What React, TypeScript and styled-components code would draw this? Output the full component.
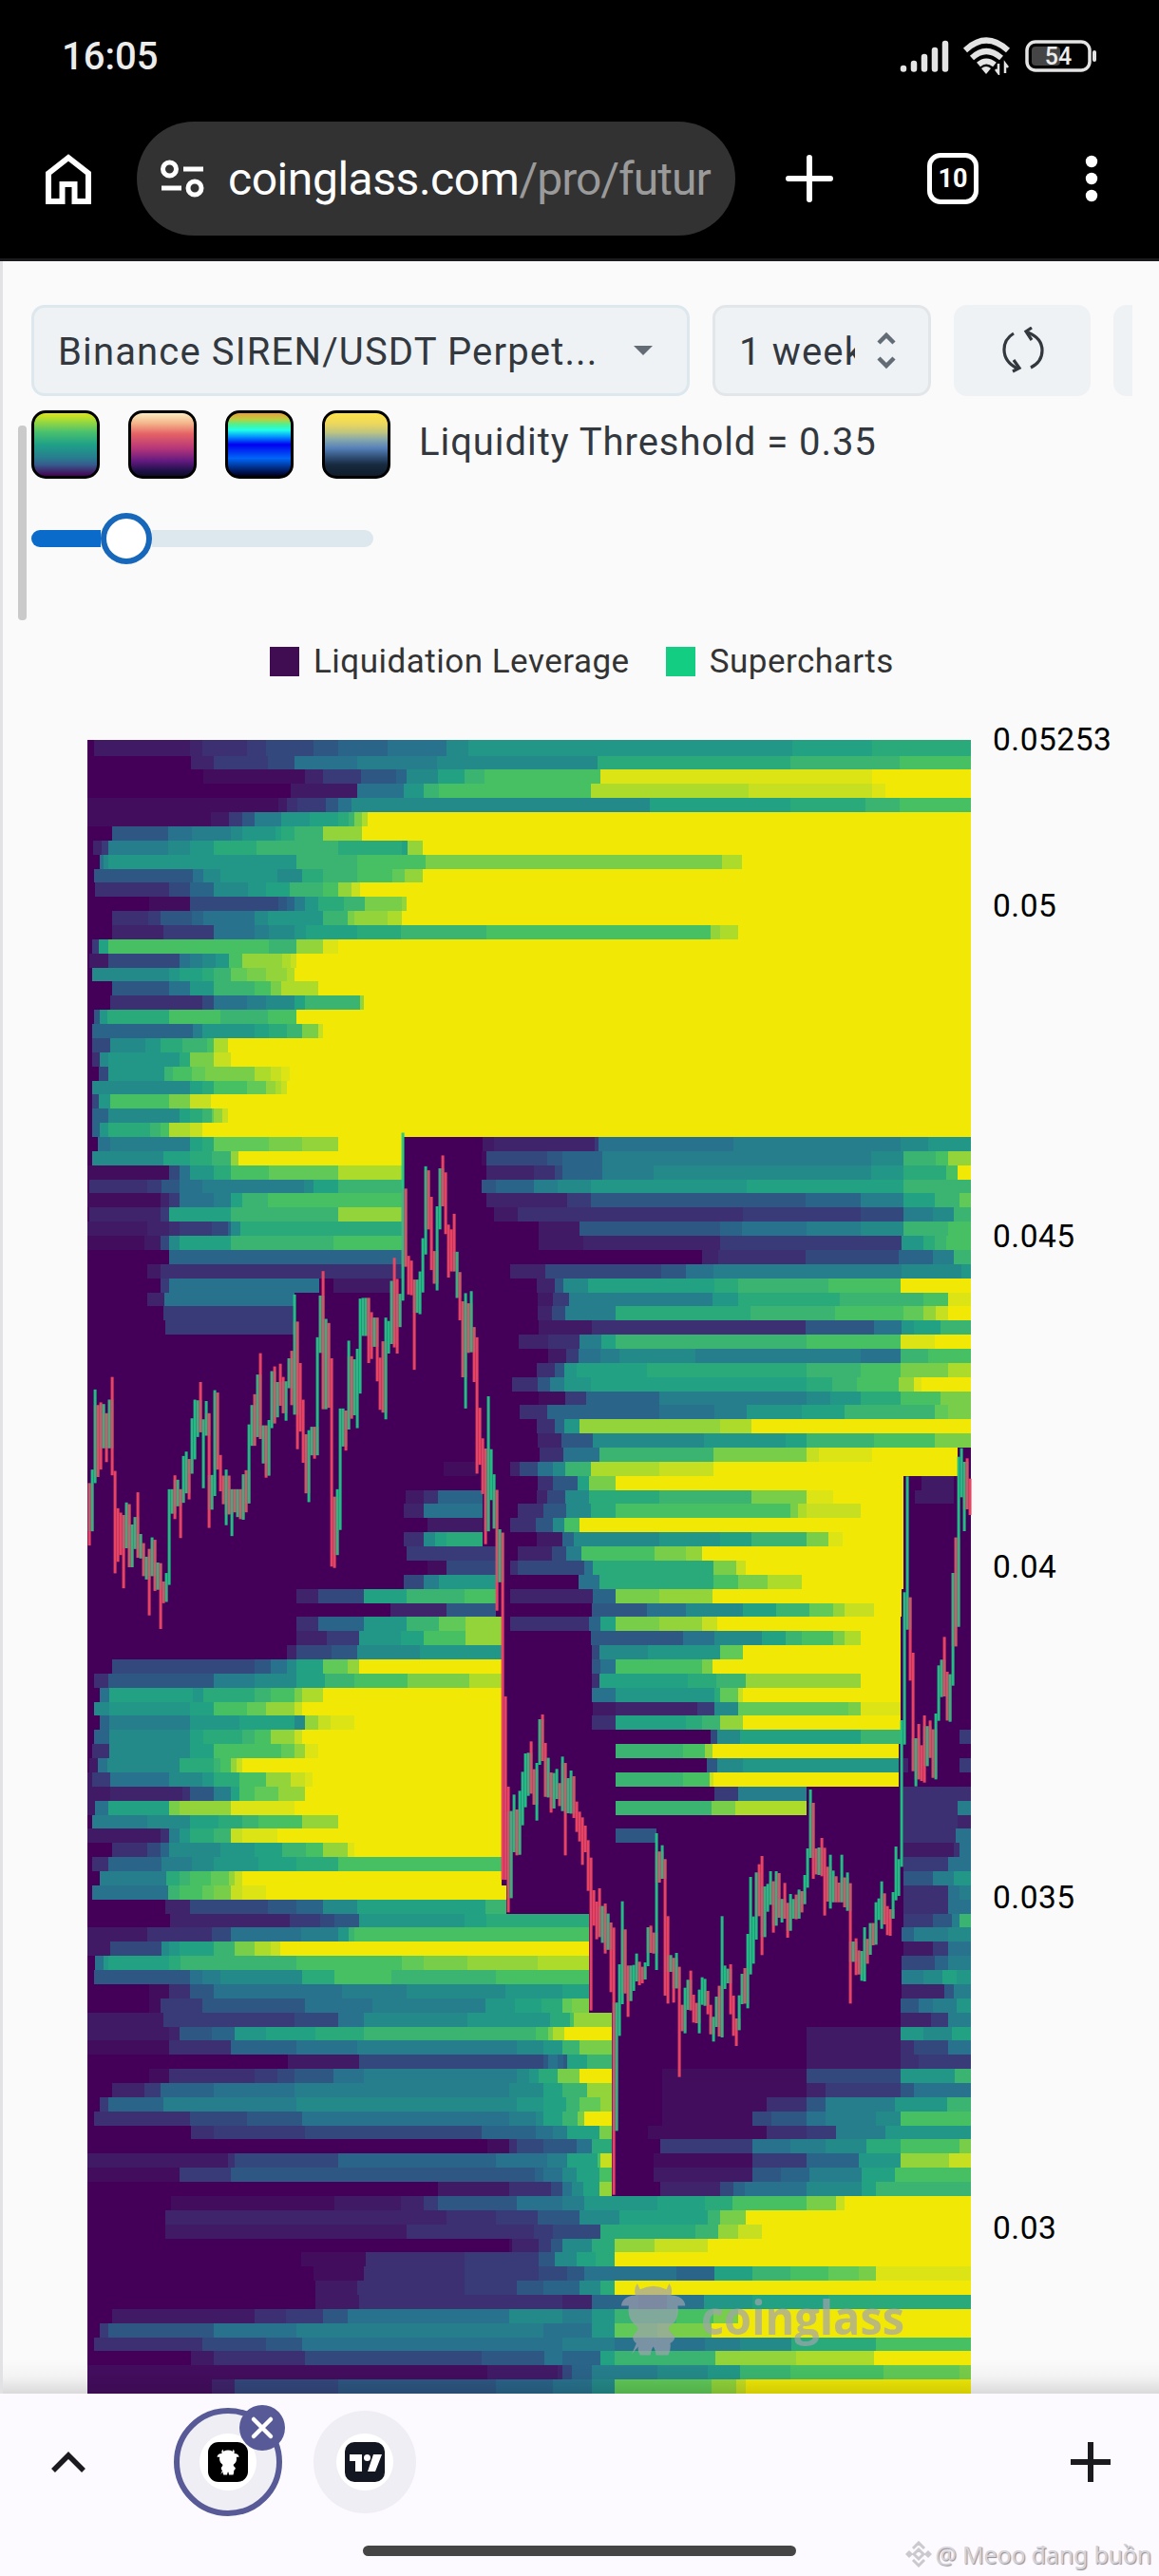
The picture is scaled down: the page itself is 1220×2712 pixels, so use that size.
import React from 'react';
import styled, { createGlobalStyle } from 'styled-components';

const GlobalStyle = createGlobalStyle`
  * {
    box-sizing: border-box;
  }
  body {
    margin: 0;
    background: #fafafa;
    font-family: Roboto, 'Liberation Sans', sans-serif;
  }
`;

/* ---------- chart data ---------- */

const PALETTE: Record<string, string> = {
  a: '#440058', b: '#430d5e', c: '#411a66', d: '#3f246c', e: '#3c2f72', f: '#383b77',
  g: '#33487d', h: '#2e5783', i: '#2a6489', j: '#28728d', k: '#267e8c', l: '#248a89',
  m: '#229787', n: '#22a183', o: '#2aaa7b', p: '#3ab470', q: '#47c063', r: '#60c957',
  s: '#78cd49', t: '#92d43a', u: '#acdb2b', v: '#c6df20', w: '#dde416', y: '#f1e905',
};

// One string per price row: a colour level followed by the x where it starts.
const HEAT_ROWS = [
  'a0c7d108e121f168g188h238i264j316l378m401n742o826',
  'a0d109f133g190j218k284l368o537p740q855',
  'a0b122d229f248h288i325l336n369p397q418w540y826',
  'a0c214j284m333p354q370u530v696w826y840',
  'b0c201e210f221h251j264l278n592o740p819q855',
  'b0c130f149h163k176m204n234o264p275s281u289y295',
  'a0h26j85k110l151m163n198o204p218t248y289',
  'a0d6f15k22l85m108o133p178o264n331t337y353',
  'a0j13l17m22p220q284s356u668y689',
  'a0h7j111l122m140l200o226p248q284r321t334y353',
  'a0e8g86i108l133m169n188p213q248t264v278y287',
  'a0b65g108h201i210k218m229o243p270s292t331y336',
  'a0e26f64h77i110j122l176m190p248s274t281u316y331',
  'a0d26f80j133k176l191m218n230o284p330q420t656u666y685',
  'a0f5n12q22p191t220w248y264',
  'a0c2g22j97k108l121m135q149t163u205v214y220',
  'a0l5m86n97o121p133r151s168t188u210y218',
  'a0h26j86m108p133q176s193u204y243',
  'a0e24g121j133k168l188n218p229t287y291',
  'a0h7m13o21q86p140q190y220',
  'a0i5k111m121n176o191p210s226v243y248',
  'a0g5l24m61o77p100q126u133y148',
  'a0e5l13m22o97s108v133y151',
  'a0g12m22p81q90r110s124u176v193w204y213',
  'a0l5n108o121q133r168t188u198v204y210',
  'a0g5m12q24s86v108y130',
  'a0i5l22n97o108p121r131t133v142y148',
  'a0i5m13o22p66q77u86v108y121',
  'a0j11k24n108o121r133s191t226y264a333c416d428f534j538k680l856m885',
  'a0l5n80o108p131t151y159a333b415g420h484i500k542l825p859q893t906',
  'b0g86j97m108o133q151r191u264a333d420e470g492i500k542l596m825o859q904y916',
  'a0e2f63h78j97k121l228n238p264a333h415i430k470l495m530n694p859',
  'b0d77f86j97k133n151p163q190a333d420f505h530i756k814n859p892r918',
  'a0d2f77n86p151t264a333c428e453f690g814k859l890p912',
  'c0d63e86f97g131i148l151o161a333c475h518i666j689k757l814p859q906',
  'b0c60g77l86n97p151q259a333c475d522f666m857o880p892q904',
  'a0i86a331d647e664g756i854k890p912',
  'a0c63e77a333d445g482h604j630k659l857m920',
  'a0f77j86a244c259a325d473h492l501n527o660p685q780y856',
  'a0d63j81a218c474f490k507m658o685p792q880w906',
  'a0f80a218d474g489k503o556p698q787r859t880v893y906',
  'a0f82a218c475e531h756j828m857n870p898',
  'a0d454e485k518n541p556q757w856y892',
  'a0c485f504j517k540l560k640j814p856q885',
  'a0e473h492m502n515o589p757q814s856u906',
  'a0e447h474k487m502n530o757p784q810t854w870y878',
  'a0b475f503i525k602l757m782o814q856s898',
  'a0e455i484j602k660m694n752p797r892s906',
  'a0e473i492m502t518u666y699',
  'a0d474h499l532m649n735p757q828s892',
  'a0e476j501p539s659v757w770y826a916',
  'a0b375a410d445g455j474l490p503u530v602y659a916',
  'a0e474h490n516s528y556a859c878a912',
  'a0c335e354i369a416d473g484l503o528p602s699w757y785a859c871a912',
  'a0d333j354a416e453h480l504o530q556s740u748v757y814a859',
  'a0c358a416e445h472l490q502y518a859',
  'a0e333l354n366o378a416c473i500l512m602n666p699s757w780y795a859',
  'a0f336a430d453g489k504q520s597t630y647a859',
  'a0b358g378a430e445g453j523o532s659v683y693a859',
  'a0g333k354m370a430j517o539q659s685u716y752a859',
  'a0d220g243n291p336q397a430d445i532s556t602y658a857',
  'a0d319h378a430h531j589l630n690p725r760t785v797y828a857',
  'a0e220i243m291p336r370t398a436e445i528n540s556t602v647y663a856',
  'a0d220f252m286n330q354t398a436h530j627l660n710p735q752s785u797y814a856',
  'a0d210g220h257l284m350a436g531l539m590r666y690a856',
  'a0g26h176j193l210n220r248t274y286a436h531j540q556s647y658a856',
  'a0e7h22k133l176n220p250q281s337u402a436e531n539o632p662t693y814a856',
  'a0j13n23m111o122p176q193s218u226y248a436j531m556o660r666v685y690a856',
  'a0l7m23n108q133r168t188v218y226a436c532d556f642l660r685s801w814a856',
  'a0i13k23m108n160l218t229v243w256y281a436e531n556o630p647t666y690a856',
  'a0i7l23n108o122p163q176t193v218y226a436g656l663n687p814a856f918',
  'a0e5l23n108q133r204t218w229y243a436p556q627t650y658a854',
  'a0c2j11l21o97p133q140t151v157y163a436h652l663m690a854d859a864f918',
  'c0f5j24l86m121o133q160t188v214w229y237a436p556q627v655y659a854',
  'c0d24e100h108k133n151q160r176t201y229a436f660k685a757e859',
  'c0j8n22s86t97w151y218a436p556s657u682a757e859k916',
  'a0k5l63n108o138p163q180t226y264a436e859d916',
  'c0e77k86m97o108p133v151w163y200a436h556a599e859j914',
  'a0e26g63i77l86m140n176p205q230t248w274y281a436c859e912j918',
  'a0e5i22k78l110m133n180o220q264a436f859j906',
  'a0k13o83p97q108r130t149v155y163a436h859k890m912',
  'a0j5p85q97r121s133v151w163y188a441e859j906k918',
  'a0d82g108h190i220l248n284p419a441e859j906',
  'a0d87f213g245h260m286n397o420a528f859h890k910p918',
  'c0e63g131j151k225m264p275q281a528i857k870l906',
  'c0g24l78m86n97p133s155u176v193y203a528c859f890j906',
  'a0j8m17n22o86p98q220r331s354t400u474a528g857i892k906',
  'a0h7j108k121l140o226q260p320q430a528k857l880n900m915',
  'a0b65e86h108j133k268l336m440n500a528d857h902k912',
  'a0b65f77h121j229k300m419n450o478r500s510a528h856j875k890m915',
  'c0f80g218j264l291m400o487q508t512a552d856f888k906',
  'c0d86h97i131m155n188o240p291q472s485u490y502a552c757m856l880n910',
  'b0e86i151j220k284l452m480p500s518a552c757e856g870j906',
  'a0c211g286h480i495h501j485n505p526a552c757e856f875',
  'a0b65e86f176g200h218j259k291l452m465o475s495y518a552b605g757m856p913',
  'a0d26f60i77j133k218l444n480p500t526a552b605d757f777h856j870',
  'a0f13i22k80l220m452n480p504r518t540a552b605e715h757k777m850p905',
  'a0e7g108h168j226k444l472n480p500s516y523a552b605g700h720j757k777l830q856',
  'a0e109f133g229i415j472k490n505s539a552b590e715f757k788m840',
  'a0b421e444g452h480j515o531a552f603j700k740l777o820q856s918',
  'c0e148g155i264j430k484n505q537v540a552b596f700i757m812t856v907',
  'b0f97h151i471j480l500n515q539a552c596h700i730k760n815q850',
  'a0c369e444g488j500l510n522t539a552d603g666i680j692l757n815p830',
  'a0b88c260d330f354h369j452k500m523n600o650q679s757v788y797',
  'a0d82e378f430h474l518n560p653s666y693',
  'a0c82e336f470g490o540p640t664v685y710',
  'a0b444d447f475h488l500o531t555v597y653',
  'a0b225e293f397h475l492n515o535y555',
  'a0b238e291f397g475h505j523i620n660p700q740r780s812w830',
  'a0c240e284f397h452i480l518o540y555',
  'a0c240e286d500i531h580j610m649n700o780',
  'a0c26e176f209h248j274l444k500m531p555q620s659y685',
  'a0f13h22j133k220j480m531r555s600y657',
  'a0e7g121h188j226k500j555k650l687o741q830',
  'a0c109e133g229h415j481i500n540p555t661u746y828',
  'b0c421d495g500i510k531l600m653p687q740r838s918',
  'b0d131g155h264i430j490l531r555t657v683y693',
];

const PLOT_W = 930;
const PLOT_H = 1741;
const ROW_H = 14.866;
const FIRST_ROW_H = 16.6;

const parseRow = (row: string) =>
  Array.from(row.matchAll(/([a-z])(\d+)/g))
    .map((m) => ({ level: m[1], x: Number(m[2]) }))
    .sort((p, q) => p.x - q.x);

// Bars are "direction high-low" counted down from the series origin.
interface Series {
  origin: number;
  unit: number;
  bars: string;
}

const SERIES: Series[] = [
  {
    origin: 401,
    unit: 1 / 2.8,
    bars: `r1068-1252 g1028-1210 g792-1068 r838-1050 r830-1028 g835-965 r862-1006 g822-965 r755-1045 r1032-1334
      r1142-1300 r1155-1280 r1162-1378 g1125-1260 r1130-1316 g1190-1316 g1168-1262 r1095-1288 g1218-1290 r1245-1342
      g1285-1352 r1262-1458 g1228-1342 r1235-1386 g1302-1382 r1304-1498 r1358-1422 g1333-1418 g1086-1368 g1086-1158
      r1045-1174 g1058-1136 r1086-1230 g988-1126 g975-1098 r997-1116 g877-1040 g822-998 g824-932 r770-918
      g880-1083 g826-928 r862-1200 g1044-1146 g794-1106 r801-1028 r985-1092 r1046-1130 g1028-1192 r1046-1160
      g1086-1224 r1086-1154 g1086-1168 r1086-1174 g1042-1176 r1030-1154 g895-1128 g838-958 r806-958 g748-932
      r685-938 g898-1010 r898-1052 g882-1046 g738-906 r724-892 g770-874 r716-840 r755-862 g768-884
      g700-788 r678-838 g512-866 r592-968 r714-916 r822-1008 r924-1098 g912-1124 g902-986 r902-996
      g638-986 g515-684 r443-850 g584-850 r596-846 r700-1314 r1108-1318 g1086-1280 g848-1206 g848-960
      r854-972 g648-910 r694-878 g703-868 g672-906 g524-804 g522-634 g522-634 r522-714 r564-702
      g580-666 r580-768 r698-852 r650-860 g580-880 g590-686 g472-658 r404-668 r466-686 g510-608
      g35-530 r200-430 r398-512 r412-514 r468-734 g468-566 g444-570 g346-506 g134-394 r146-320
      r224-440 r384-480 g252-500 g140-320 r102-252 r152-334 r306-462 r320-444 r274-444 g386-522
      r446-588 r532-756 g508-848 r538-684 g502-682 r608-770 r638-1040 r846-1014 r936-1100 r966-1248
      g812-1210 g968-1118 g1042-1202 r1088-1444 g1204-1360 r1214-2237`,
  },
  {
    origin: 921,
    unit: 1 / 3,
    bars: `r258-837 r543-940 g620-895 g568-750 r615-760 g556-758 g496-665 g438-608 g436-572 r400-565
      r488-600 g468-650 g330-474 r315-462 r405-575 g452-577 r498-625 g500-612 g487-582 r532-604
      g448-620 r468-760 g516-627 g492-628 r510-642 r590-686 r622-716 r640-790 r666-750 r712-872
      r767-1250 r870-982 r906-1025 r864-1018 g920-1036 r912-1070 g944-1058 r972-1192 r988-1832 g1225-1630
      g1104-1330 g905-1230 r994-1196 r1108-1270 g1108-1220 g1106-1188 g1070-1158 r1096-1170 r1112-1164 g1098-1152
      g987-1110 r982-1068 r1004-1070 g690-1122 r748-846 g728-834 r772-1203 r952-1228 g1075-1128 r1084-1225
      g1068-1180 r1112-1460 r1232-1315 g1178-1322 g1153-1248 r1124-1250 r1200-1288 r1226-1290 g1184-1322 g1145-1232
      g1150-1235 r1188-1262 r1232-1325 g1270-1348 g1206-1302 r1172-1332 g952-1335 g1108-1182 g1118-1164 r1104-1262
      r1203-1330 r1275-1362 g1202-1312 g1134-1230 r1116-1228 g1008-1243 g828-1136 g953-1102 g814-1026 r788-952
      r762-1075 g858-1018 g850-938 g810-916 r842-1004 g810-982 r816-957 g898-972 r847-960 r910-1020
      g882-998 g898-960 r884-962 g868-960 r873-940 g822-914 g738-862 g552-768 r594-834 r738-820
      g735-822 r705-826 r736-950 r796-906 g758-928 g808-908 r826-908 r846-908 g758-908 r830-924
      g814-935 r848-1228 g1032-1096 r1022-1138 r1060-1136 g1062-1156 g987-1158 r1024-1102 g974-1074 r974-1044
      g908-1042 g896-964 g842-992 r880-978 r920-1012 r930-1014 g876-960 g732-902 g772-888 g333-796
      g-71-410 g-437-47 r-55-208 r120-494 g390-542 r345-520 r412-525 r318-530 g352-478 r334-452
      r362-515 g312-520 g160-335 g142-260 r70-258 r180-334 g188-338 g-132-224 r-244-100 g-499-38
      g-526--371 g-483--264 r-494--333 r-430--315`,
  },
];

interface Bar {
  up: boolean;
  top: number;
  bottom: number;
}

const BARS: Bar[] = SERIES.flatMap(({ origin, unit, bars }) =>
  Array.from(bars.matchAll(/([rg])(-?\d+)-(-?\d+)/g)).map((m) => ({
    up: m[1] === 'g',
    top: origin + Number(m[2]) * unit,
    bottom: origin + Number(m[3]) * unit,
  }))
);

const TICKS = [
  { label: '0.05253', y: 0 },
  { label: '0.05', y: 175 },
  { label: '0.045', y: 523 },
  { label: '0.04', y: 871 },
  { label: '0.035', y: 1219 },
  { label: '0.03', y: 1567 },
];

/* ---------- browser chrome ---------- */

const Page = styled.div`
  width: 1220px;
  height: 2712px;
  display: flex;
  flex-direction: column;
  overflow: hidden;
`;

const StatusBar = styled.div`
  height: 116px;
  padding: 2px 65px 0 65px;
  display: flex;
  align-items: center;
  justify-content: space-between;
  background: #000;
  color: #ececec;
  font-size: 40px;
  font-weight: 500;
`;

const StatusIcons = styled.div`
  display: flex;
  align-items: center;
  gap: 14px;
`;

const BrowserBar = styled.div`
  height: 159px;
  padding: 2px 64px 14px 44px;
  display: flex;
  align-items: center;
  background: #000;
  border-bottom: 3px solid #1b1a1d;
  color: #fff;

  svg {
    flex: none;
  }
`;

const UrlPill = styled.div`
  width: 632px;
  height: 120px;
  margin: 0 51px 0 44px;
  padding: 0 14px 0 25px;
  display: flex;
  align-items: center;
  border-radius: 60px;
  background: #323232;
`;

const Url = styled.div`
  flex: 1;
  margin-left: 25px;
  white-space: nowrap;
  font-size: 48px;
  letter-spacing: -0.45px;

  span {
    color: #9a9a9a;
    letter-spacing: -1px;
  }
`;

const TabCount = styled.div`
  width: 54px;
  height: 54px;
  margin: 0 112px 0 97px;
  display: flex;
  align-items: center;
  justify-content: center;
  border: 5px solid #fff;
  border-radius: 14px;
  font-size: 27px;
  font-weight: 700;
`;

/* ---------- page content ---------- */

const Content = styled.main`
  position: relative;
  flex: none;
  height: 2245px;
  padding-top: 46px;
  border-left: 3px solid #e2e2e4;
  background: #fafafa;
  overflow: hidden;
`;

const ScrollThumb = styled.div`
  position: absolute;
  left: 16px;
  top: 173px;
  width: 9px;
  height: 205px;
  border-radius: 4px;
  background: #cacaca;
`;

const Toolbar = styled.div`
  width: 1159px;
  height: 97px;
  margin-left: 30px;
  display: flex;
  gap: 24px;
  overflow: hidden;
`;

const Field = styled.div<{ $width: number; $border?: string; $right?: number }>`
  flex: none;
  width: ${(p) => p.$width}px;
  height: 96px;
  padding: 0 ${(p) => p.$right || 25}px 0 25px;
  display: flex;
  align-items: center;
  justify-content: space-between;
  border: 3px solid ${(p) => p.$border || '#eef2f5'};
  border-radius: 14px;
  background: #eef2f5;
  color: #32383e;
`;

const FieldText = styled.span<{ $width?: number }>`
  width: ${(p) => (p.$width ? `${p.$width}px` : 'auto')};
  padding-top: 2px;
  overflow: hidden;
  white-space: nowrap;
  font-size: 40px;
  letter-spacing: 1.15px;
`;

const Swatches = styled.div`
  height: 74px;
  margin: 13px 0 0 30px;
  display: flex;
  align-items: center;
  gap: 30px;
`;

const Swatch = styled.div<{ $fill: string }>`
  width: 72px;
  height: 72px;
  border: 3px solid #000;
  border-radius: 15px;
  background: linear-gradient(${(p) => p.$fill});
`;

const Threshold = styled.div`
  margin-top: -4px;
  color: #32383e;
  font-size: 40px;
  line-height: 60px;
  white-space: nowrap;
  letter-spacing: 0.95px;
`;

const Slider = styled.div`
  width: 360px;
  height: 54px;
  margin: 35px 0 0 30px;
  display: flex;
  align-items: center;
`;

const Track = styled.div<{ $filled?: boolean }>`
  flex: ${(p) => (p.$filled ? '0 0 73px' : '1')};
  height: 18px;
  background: ${(p) => (p.$filled ? '#0b6bcb' : '#dde7ee')};
  border-radius: ${(p) => (p.$filled ? '9px 0 0 9px' : '0 9px 9px 0')};
`;

const Thumb = styled.div`
  width: 54px;
  height: 54px;
  border: 6px solid #1768bb;
  border-radius: 50%;
  background: #fff;
`;

const Legend = styled.div`
  height: 46px;
  margin: 79px 0 0 281px;
  display: flex;
  align-items: center;
  color: #333;
  font-size: 35px;
`;

const LegendItem = styled.div<{ $color: string }>`
  display: flex;
  align-items: center;
  gap: 15px;
  margin-right: 38px;
  white-space: nowrap;
  letter-spacing: 0.5px;

  &::before {
    content: '';
    width: 31px;
    height: 31px;
    background: ${(p) => p.$color};
  }
`;

const Chart = styled.svg`
  display: block;
  margin: 60px 0 0 89px;
  overflow: visible;

  .tick {
    font-size: 33.5px;
    letter-spacing: 0.5px;
    fill: #000;
  }
  .mark {
    font-family: 'Open Sans', 'Noto Sans', sans-serif;
    font-size: 50px;
    font-weight: 700;
  }
`;

const BottomFade = styled.div`
  position: absolute;
  left: 0;
  right: 0;
  bottom: 0;
  height: 34px;
  background: linear-gradient(rgba(0, 0, 0, 0), rgba(0, 0, 0, 0.03) 50%, rgba(0, 0, 0, 0.13));
`;

/* ---------- bottom tab strip ---------- */

const TabStrip = styled.footer`
  position: relative;
  flex: 1;
  display: flex;
  flex-direction: column;
  align-items: center;
  background: #fcfaff;
`;

const TabRow = styled.div`
  width: 100%;
  height: 144px;
  padding: 0 50px 0 53px;
  display: flex;
  align-items: center;

  > svg {
    flex: none;
  }
`;

const Tab = styled.div<{ $active?: boolean }>`
  position: relative;
  width: ${(p) => (p.$active ? 114 : 108)}px;
  height: ${(p) => (p.$active ? 114 : 108)}px;
  margin-left: ${(p) => (p.$active ? 92 : 33)}px;
  display: flex;
  align-items: center;
  justify-content: center;
  border-radius: 50%;
  border: ${(p) => (p.$active ? '6px solid #575a96' : 'none')};
  background: #f0eef5;
`;

const Favicon = styled.div`
  width: 60px;
  height: 60px;
  display: flex;
  align-items: center;
  justify-content: center;
  border-radius: 50%;
  background: #fff;
`;

const CloseBadge = styled.div`
  position: absolute;
  top: -9px;
  right: -9px;
  width: 48px;
  height: 48px;
  display: flex;
  align-items: center;
  justify-content: center;
  border-radius: 50%;
  background: #575a96;
`;

const Spacer = styled.div`
  flex: 1;
`;

const GestureBar = styled.div`
  width: 456px;
  height: 11px;
  margin-top: 16px;
  border-radius: 6px;
  background: #454545;
`;

const Credit = styled.div`
  position: absolute;
  right: 8px;
  bottom: 6px;
  display: flex;
  align-items: center;
  gap: 4px;
  color: #d6d3d9;
  font-family: 'Noto Sans', sans-serif;
  font-size: 25px;
  line-height: 34px;
  letter-spacing: -0.2px;
  white-space: nowrap;
  text-shadow: 1px 1px 1px #8d8a92;
`;

const BULL =
  'M17 0 L20 7 Q34 -1 48 7 L51 0 Q55 6 53 14 Q67 15 68 26 L60 26 Q62 41 54 48 Q49 51 51 55 L57 62 Q57 67 52 70 Q53 77 50 84 L37 84 Q36 77 34 74 Q32 77 31 84 L20 84 Q17 79 18 74 L11 83 L16 70 Q11 66 13 60 L17 55 Q19 51 14 48 Q6 40 8 26 L0 26 Q1 15 15 14 Q13 6 17 0Z';

function Heatmap() {
  return (
    <g shapeRendering='crispEdges'>
      {HEAT_ROWS.map((row, r) => {
        const y = r === 0 ? 0 : FIRST_ROW_H + (r - 1) * ROW_H;
        const h = r === 0 ? FIRST_ROW_H : ROW_H;
        return parseRow(row).map((cell, i, cells) => {
          const end = i + 1 < cells.length ? cells[i + 1].x : PLOT_W;
          return (
            <rect
              key={`${r}-${i}`}
              x={cell.x}
              y={Math.round(y)}
              width={end - cell.x}
              height={Math.min(Math.round(y + h), PLOT_H) - Math.round(y)}
              fill={PALETTE[cell.level]}
            />
          );
        });
      })}
    </g>
  );
}

function Candles() {
  return (
    <g>
      {BARS.map((bar, i) => (
        <rect
          key={i}
          x={i * 3 + 0.6}
          y={bar.top}
          width={3}
          height={bar.bottom - bar.top}
          fill={bar.up ? '#20c888' : '#f04863'}
          opacity={0.94}
        />
      ))}
      {/* soften the stretches where rising and falling bars alternate */}
      {BARS.slice(1).map((bar, i) => {
        const prev = BARS[i];
        const top = Math.max(bar.top, prev.top);
        const bottom = Math.min(bar.bottom, prev.bottom);
        if (bar.up === prev.up || bottom <= top) {
          return null;
        }
        return <rect key={i} x={i * 3 + 0.6} y={top} width={6} height={bottom - top} fill='#868a76' opacity={0.34} />;
      })}
    </g>
  );
}

function StatusSection() {
  return (
    <StatusBar>
      16:05
      <StatusIcons>
        <svg width='52' height='36' viewBox='0 0 52 36' stroke='#e4e4e4' strokeWidth='6.5' strokeLinecap='round'>
          <path d='M4 31V31.5M15 26V31.5M26 19V31.5M37 12V31.5M48 5V31.5' />
        </svg>
        <svg width='52' height='40' viewBox='0 0 52 40' fill='none' stroke='#e4e4e4' strokeWidth='6'>
          <path d='M3 14Q25 -7 48 14M10 22Q25 8 41 22M17 29Q25 22 34 29' />
          <path d='M20 33Q25 29 30 33L25 39Z' fill='#e4e4e4' stroke='none' />
          <path d='M38 28V38L35 34M45 38V28L48 32' strokeWidth='2.5' />
        </svg>
        <svg width='76' height='34' viewBox='0 0 76 34' fill='none'>
          <rect x='2' y='2' width='66' height='30' rx='9' stroke='#e4e4e4' strokeWidth='3.5' />
          <rect x='7' y='7' width='30' height='20' rx='4' fill='#454545' />
          <rect x='71' y='11' width='4' height='12' rx='2' fill='#e4e4e4' />
          <text x='35' y='26' textAnchor='middle' fontSize='25' fontWeight='500' fill='#ececec'>54</text>
        </svg>
      </StatusIcons>
    </StatusBar>
  );
}

function BrowserSection() {
  return (
    <BrowserBar>
      <svg width='56' height='60' viewBox='0 0 56 60' fill='none' stroke='#fff' strokeWidth='6'>
        <path d='M7 24.5L28 8L49 24.5V54H34.5V36H21.5V54H7Z' />
      </svg>
      <UrlPill>
        <svg width='46' height='40' viewBox='0 0 46 40' fill='none' stroke='#fff' strokeWidth='5'>
          <circle cx='9.5' cy='10' r='7' />
          <path d='M24 10H45M1 30H22' />
          <circle cx='36' cy='30' r='7' />
        </svg>
        <Url>
          coinglass.com<span>/pro/futur</span>
        </Url>
      </UrlPill>
      <svg width='54' height='54' viewBox='0 0 54 54' stroke='#fff' strokeWidth='6' strokeLinecap='round'>
        <path d='M27 5V49M5 27H49' />
      </svg>
      <TabCount>10</TabCount>
      <svg width='14' height='54' viewBox='0 0 14 54' fill='#fff'>
        <circle cx='7' cy='9' r='6.2' />
        <circle cx='7' cy='27' r='6.2' />
        <circle cx='7' cy='45' r='6.2' />
      </svg>
    </BrowserBar>
  );
}

function App() {
  return (
    <Page>
      <GlobalStyle />
      <StatusSection />
      <BrowserSection />
      <Content>
        <ScrollThumb />
        <Toolbar>
          <Field $width={693} $border='#dde7ee' $right={36}>
            <FieldText>Binance SIREN/USDT Perpet...</FieldText>
            <svg width='20' height='10' viewBox='0 0 20 10' fill='#636b74'>
              <path d='M0 0H20L10 10Z' />
            </svg>
          </Field>
          <Field $width={230} $border='#e3e6e9' $right={33}>
            <FieldText $width={122}>1 week</FieldText>
            <svg width='22' height='42' viewBox='0 0 22 42' fill='none' stroke='#636b74' strokeWidth='4.5'>
              <path d='M3 13L11 5L19 13M3 29L11 37L19 29' />
            </svg>
          </Field>
          <Field $width={144}>
            <svg width='88' height='50' viewBox='0 0 88 50' fill='none' stroke='#32383e' strokeWidth='3.2'>
              <path d='M35 7Q25 13 25 24Q25 37 39 44M53 43Q65 37 65 25Q65 12 50 6' />
              <path d='M54 1L48 5L54 14M34 47L41 43.5L35 35' />
            </svg>
          </Field>
          <Field $width={100} />
        </Toolbar>
        <Swatches>
          <Swatch $fill='#e0e319, #a0da39 12%, #4ac16d 30%, #1fa187 50%, #277f8e 70%, #365c8d 82%, #440154' />
          <Swatch $fill='#fcecc0, #f3b58b 16%, #e56365 33%, #b63679 56%, #641a80 76%, #1d1147 92%, #120a28' />
          <Swatch $fill='#eb9f3a, #b8d040 10%, #50f090 18%, #20ffe8 27%, #0090ff 38%, #0000f0 50%, #0066f8 72%, #001a60 92%, #000020' />
          <Swatch $fill='#fde348, #eed85c 16%, #c2c67c 30%, #86a8ac 42%, #5580b8 56%, #35567f 68%, #172a40 82%, #101c2a' />
          <Threshold>Liquidity Threshold = 0.35</Threshold>
        </Swatches>
        <Slider>
          <Track $filled />
          <Thumb />
          <Track />
        </Slider>
        <Legend>
          <LegendItem $color='#400d53'>Liquidation Leverage</LegendItem>
          <LegendItem $color='#13cd83'>Supercharts</LegendItem>
        </Legend>
        <Chart width='1128' height={PLOT_H} viewBox={`0 0 1128 ${PLOT_H}`}>
          <Heatmap />
          <Candles />
          <g fill='#a2a3b0' opacity='0.68'>
            <path d={BULL} transform='translate(562 1625) scale(0.99 0.9)' />
            <text className='mark' x='646' y='1679' textLength='214' lengthAdjust='spacingAndGlyphs'>coinglass</text>
          </g>
          {TICKS.map((tick) => (
            <text key={tick.label} className='tick' x='953' y={tick.y + 11}>
              {tick.label}
            </text>
          ))}
        </Chart>
        <BottomFade />
      </Content>
      <TabStrip>
        <TabRow>
          <svg width='38' height='26' viewBox='0 0 38 26' fill='none' stroke='#1b1b1f' strokeWidth='5.5'>
            <path d='M3 22L19 6L35 22' />
          </svg>
          <Tab $active>
            <Favicon>
              <svg width='42' height='42' viewBox='0 0 42 42'>
                <rect width='42' height='42' rx='11' fill='#000' />
                <path d={BULL} fill='#fff' transform='translate(9.5 7.5) scale(0.34 0.32)' />
              </svg>
            </Favicon>
            <CloseBadge>
              <svg width='26' height='26' viewBox='0 0 26 26' stroke='#fff' strokeWidth='4.5' strokeLinecap='round'>
                <path d='M4 4L22 22M22 4L4 22' />
              </svg>
            </CloseBadge>
          </Tab>
          <Tab>
            <Favicon>
              <svg width='42' height='42' viewBox='0 0 42 42'>
                <rect width='42' height='42' rx='10' fill='#131722' />
                <path d='M5 13H18V31H11V20H5ZM30 13H39L32 31H24Z' fill='#fff' />
                <circle cx='23.5' cy='16.5' r='3.5' fill='#fff' />
              </svg>
            </Favicon>
          </Tab>
          <Spacer />
          <svg width='44' height='44' viewBox='0 0 44 44' stroke='#1b1b1f' strokeWidth='6'>
            <path d='M22 1V43M1 22H43' />
          </svg>
        </TabRow>
        <GestureBar />
        <Credit>
          <svg width='28' height='28' viewBox='0 0 28 28' fill='none' stroke='#cbc8ce' strokeWidth='3'>
            <path d='M8 8L14 2L20 8M8 20L14 26L20 20M14 9L19 14L14 19L9 14ZM2 14L4 12L6 14L4 16ZM22 14L24 12L26 14L24 16Z' />
          </svg>
          @ Meoo đang buồn
        </Credit>
      </TabStrip>
    </Page>
  );
}

export default App;
